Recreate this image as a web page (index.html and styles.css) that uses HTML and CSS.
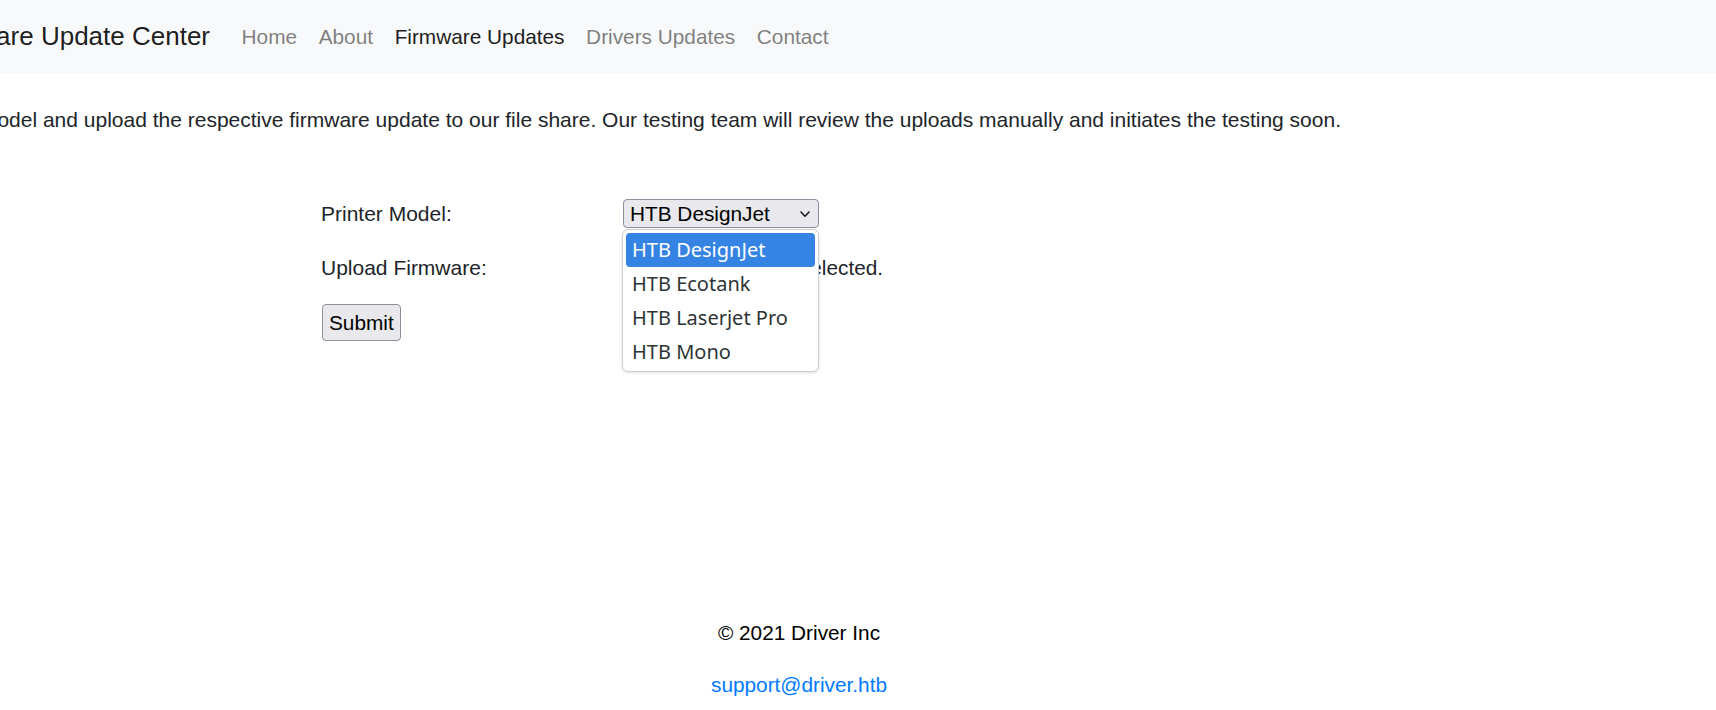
FILE: index.html
```html
<!DOCTYPE html>
<html lang="en">
<head>
<meta charset="utf-8">
<title>MFP Firmware Update Center</title>
<link rel="stylesheet" href="styles.css">
</head>
<body>
<nav class="navbar">
  <div class="brand-box"><a class="brand" href="#">MFP Firmware Update Center</a></div>
  <ul class="nav">
    <li><a class="nav-link" href="#">Home</a></li>
    <li><a class="nav-link" href="#">About</a></li>
    <li><a class="nav-link active" href="#">Firmware Updates</a></li>
    <li><a class="nav-link" href="#">Drivers Updates</a></li>
    <li><a class="nav-link" href="#">Contact</a></li>
  </ul>
</nav>

<div class="intro">
  <p>Select printer model and upload the respective firmware update to our file share. Our testing team will review the uploads manually and initiates the testing soon.</p>
</div>

<form class="upload-form">
  <div class="form-grid">
    <span class="label">Printer Model:</span>
    <div class="select-wrap">
      <div class="select">
        <span class="select-value">HTB DesignJet</span>
        <svg class="chevron" width="10" height="7" viewBox="0 0 10 7"><polyline points="1,1 5,5.2 9,1" fill="none" stroke="#1b1b1b" stroke-width="1.6" stroke-linecap="round" stroke-linejoin="round"/></svg>
      </div>
      <ul class="popup">
        <li class="option selected">HTB DesignJet</li>
        <li class="option">HTB Ecotank</li>
        <li class="option">HTB Laserjet Pro</li>
        <li class="option">HTB Mono</li>
      </ul>
    </div>

    <span class="label label-upload">Upload Firmware:</span>
    <div class="file">
      <span class="file-btn">Browse…</span>
      <span class="file-text">No file selected.</span>
    </div>

    <button class="submit" type="button">Submit</button>
  </div>
</form>

<footer class="footer">
  <p>© 2021 Driver Inc</p>
  <p><a class="mail" href="#">support@driver.htb</a></p>
</footer>
</body>
</html>
```

FILE: styles.css
```css
html, body {
  margin: 0;
  padding: 0;
}

body {
  width: 1716px;
  height: 710px;
  overflow: hidden;
  background: #fff;
  color: #212529;
  font-family: "Liberation Sans", Arial, sans-serif;
  font-size: 20.8px;
  line-height: 1.5;
}

/* Navbar */
.navbar {
  display: flex;
  align-items: center;
  height: 73px;
  background: #f8f9fa;
}

.brand-box {
  flex: none;
  width: 210px;
  margin-right: 20.8px;
  display: flex;
  justify-content: flex-end;
  white-space: nowrap;
}

.brand {
  font-size: 26px;
  line-height: 39px;
  color: rgba(0, 0, 0, 0.9);
  text-decoration: none;
}

.nav {
  display: flex;
  list-style: none;
  margin: 0;
  padding: 0;
}

.nav-link {
  display: block;
  padding: 10.4px 10.8px;
  line-height: 31.2px;
  color: rgba(0, 0, 0, 0.5);
  text-decoration: none;
  white-space: nowrap;
}

.nav-link.active {
  color: rgba(0, 0, 0, 0.9);
}

/* Intro paragraph (page is scrolled horizontally) */
.intro {
  width: 1341px;
  margin-top: 31.2px;
  display: flex;
  justify-content: flex-end;
  white-space: nowrap;
  font-size: 21px;
  line-height: 31.2px;
}

.intro p {
  margin: 0;
  flex: none;
}

/* Form */
.upload-form {
  margin: 63.6px 0 0 321px;
}

.form-grid {
  display: grid;
  grid-template-columns: 302px auto;
  row-gap: 22.5px;
  align-items: center;
  justify-content: start;
}

.label {
  white-space: nowrap;
  line-height: 30px;
  font-size: 21px;
}

.label-upload {
  box-sizing: border-box;
  height: 30px;
  padding-top: 4px;
  line-height: 26px;
}

.select-wrap {
  position: relative;
  width: 196px;
}

.select {
  box-sizing: border-box;
  width: 196px;
  height: 29px;
  display: flex;
  align-items: center;
  justify-content: space-between;
  padding: 0 8px 0 6px;
  background: #e9e9ed;
  border: 1px solid #8f8f9d;
  border-radius: 4px;
  color: #000;
  line-height: 27px;
}

.chevron {
  display: block;
  margin-top: 1px;
}

.popup {
  position: absolute;
  top: 30px;
  left: -1px;
  box-sizing: border-box;
  width: 197px;
  margin: 0;
  padding: 2.5px 3px 2px 3px;
  list-style: none;
  background: #fff;
  border: 1px solid #cfcfcf;
  border-radius: 6px;
  box-shadow: 0 1px 3px rgba(0, 0, 0, 0.12);
  font-family: "Noto Sans", "Open Sans", sans-serif;
  font-size: 20px;
  z-index: 10;
}

.option {
  height: 34px;
  line-height: 34px;
  padding: 0 6px;
  color: #2e3436;
  border-radius: 4px;
  white-space: nowrap;
}

.option.selected {
  background: #3584e4;
  color: #fff;
}

.file {
  display: flex;
  align-items: center;
  height: 30px;
  white-space: nowrap;
}

.file-btn {
  box-sizing: border-box;
  height: 30px;
  padding: 0 6px;
  line-height: 28px;
  background: #e9e9ed;
  border: 1px solid #8f8f9d;
  border-radius: 4px;
}

.file-text {
  box-sizing: border-box;
  height: 30px;
  margin-left: 8px;
  padding-top: 4px;
  line-height: 26px;
}

.submit {
  grid-column: 1;
  justify-self: start;
  margin: 0 0 0 1px;
  padding: 2px 6px;
  font-family: "Liberation Sans", Arial, sans-serif;
  font-size: 20.8px;
  line-height: 31.2px;
  color: #000;
  background: #e9e9ed;
  border: 1px solid #8f8f9d;
  border-radius: 4px;
}

/* Footer */
.footer {
  width: 1598px;
  margin-top: 275.5px;
  text-align: center;
  color: #000;
}

.footer p {
  margin: 0 0 20.8px;
}

.mail {
  color: #007bff;
  text-decoration: none;
}
```
